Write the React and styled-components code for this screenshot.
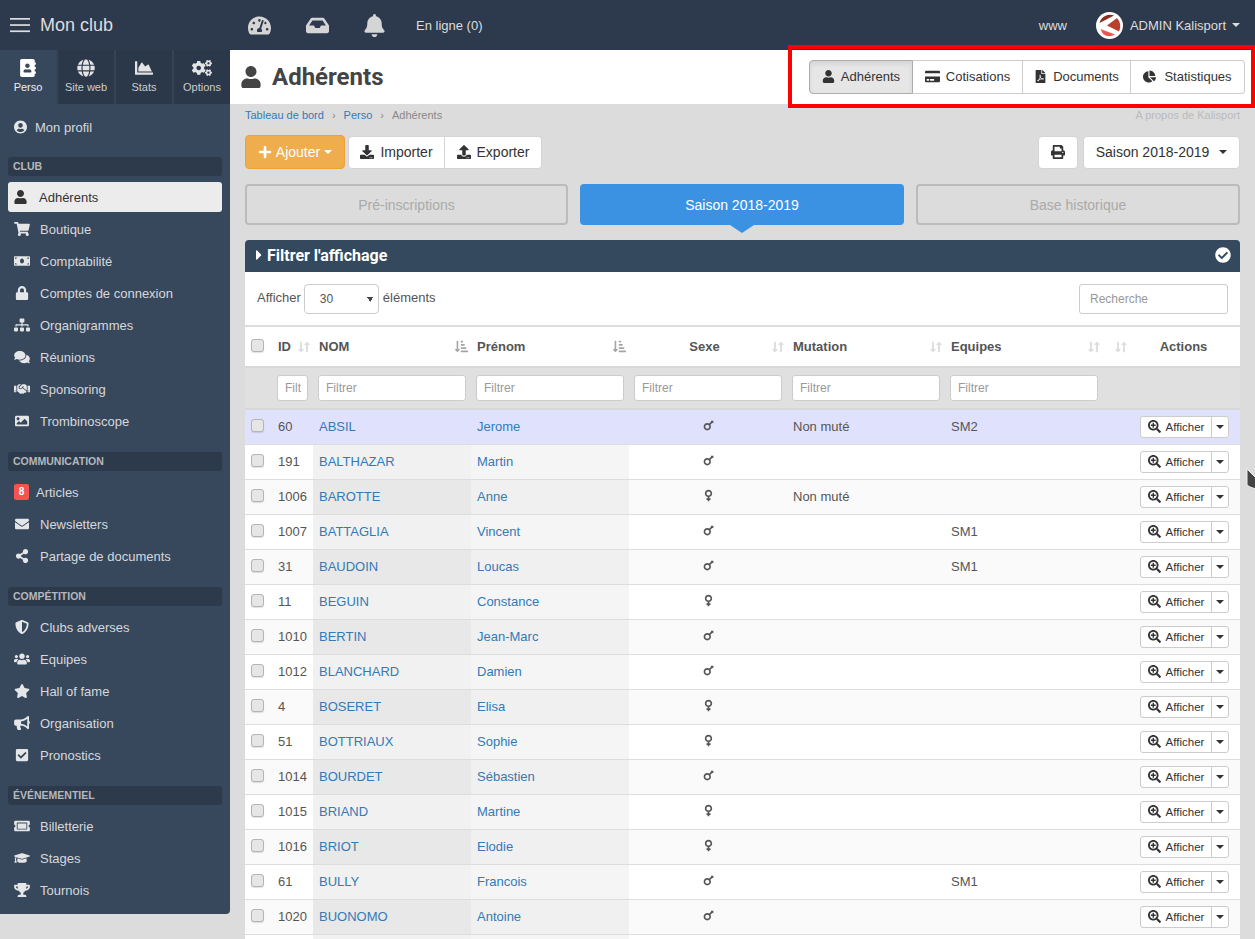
import React from 'react'
import styled, { createGlobalStyle } from 'styled-components'
import {
  FaAddressBook, FaGlobe, FaChartArea, FaCogs, FaUserCircle, FaUser, FaShoppingCart, FaMoneyBill,
  FaLock, FaSitemap, FaComments, FaHandshake, FaImage, FaEnvelope, FaShareAlt, FaShieldAlt, FaUsers,
  FaStar, FaBullhorn, FaCheckSquare, FaTicketAlt, FaGraduationCap, FaTrophy, FaTachometerAlt, FaInbox,
  FaBell, FaPlus, FaDownload, FaUpload, FaPrint, FaCreditCard, FaFilePdf, FaChartPie, FaCheckCircle,
  FaSearchPlus, FaMars, FaVenus, FaCaretRight, FaSortAmountDownAlt, FaLongArrowAltDown, FaLongArrowAltUp,
} from 'react-icons/fa'

const Global = createGlobalStyle`
  html, body {
    margin: 0;
    height: 100%;
    overflow: hidden;
    background: #dcdcdc;
    font-family: "Liberation Sans", Arial, sans-serif;
    font-size: 13px;
    color: #555;
  }
  * { box-sizing: border-box; }
`

const Page = styled.div`
  position: relative;
  width: 1255px;
  height: 939px;
  overflow: hidden;
`

const Topbar = styled.header`
  height: 50px;
  background: #2d3a4d;
  display: flex;
  align-items: center;
  color: #ddd;
`

const Brand = styled.div`
  width: 230px;
  padding-left: 10px;
  display: flex;
  align-items: center;
  gap: 10px;
  font-size: 18px;
`

const TopIcons = styled.div`
  display: flex;
  align-items: center;
  font-size: 13px;
  flex: 1;
`

const TopIcon = styled.span`
  width: ${p => p.$w}px;
  margin-right: ${p => p.$mr || 0}px;
  display: flex;
  justify-content: center;
  font-size: 23px;
  color: #d5d5d5;
`

const TopRight = styled.div`
  display: flex;
  align-items: center;
  font-size: 13px;
  padding-right: 15px;
`

const Www = styled.span`
  margin-right: 29px;
`

const UserName = styled.span`
  margin-left: 7px;
  display: inline-flex;
  align-items: center;
  gap: 6px;
`

const Caret = styled.i`
  display: inline-block;
  width: 0;
  height: 0;
  border-left: ${p => p.$s || 4}px solid transparent;
  border-right: ${p => p.$s || 4}px solid transparent;
  border-top: ${p => p.$s || 4}px solid currentColor;
`

const Body = styled.div`
  display: flex;
  align-items: flex-start;
`

const Sidebar = styled.aside`
  width: 230px;
  flex: none;
  background: #38485c;
  border-bottom-right-radius: 4px;
  padding-bottom: 7px;
`

const Tabs = styled.div`
  display: flex;
  height: 54px;
  gap: 2px;
  background: #33435a;
  margin-bottom: 8px;
`

const Tab = styled.div`
  flex: 1;
  background: ${p => p.$active ? '#38485c' : '#2a384a'};
  color: ${p => p.$active ? '#eee' : '#ccc'};
  font-size: 11px;
  display: flex;
  flex-direction: column;
  align-items: center;
  padding-top: 9px;
  gap: 4px;
  svg { height: 18px; width: 20px; color: ${p => p.$active ? '#fff' : '#e4e4e4'}; }
`

const Section = styled.div`
  margin: ${p => p.$first ? 15 : 16}px 8px 6px;
  height: 19px;
  line-height: 19px;
  padding-left: 5px;
  background: #2d3a4c;
  border-radius: 3px;
  font-size: 10.5px;
  font-weight: bold;
  color: #b4b8bd;
`

const Item = styled.div`
  margin: 0 8px 2px;
  height: 30px;
  padding-left: 6px;
  display: flex;
  align-items: center;
  gap: ${p => p.$gap || 10}px;
  border-radius: 3px;
  background: ${p => p.$active ? '#ececec' : 'transparent'};
  color: ${p => p.$active ? '#333' : '#d5d8dc'};
  svg {
    width: ${p => p.$gap ? 13 : 16}px;
    height: 14px;
    flex: none;
    color: ${p => p.$active ? '#333' : '#e4e6e8'};
  }
`

const Badge = styled.span`
  width: 15px;
  height: 16px;
  line-height: 16px;
  margin-right: -3px;
  text-align: center;
  background: #f55353;
  color: #fff;
  border-radius: 2px;
  font-size: 10px;
  font-weight: bold;
`

const Main = styled.main`
  flex: 1;
  min-width: 0;
`

const PageHead = styled.div`
  height: 54px;
  background: #fff;
  display: flex;
  align-items: center;
  padding: 0 10px;
`

const Title = styled.h1`
  flex: 1;
  margin: 0;
  display: flex;
  align-items: center;
  gap: 10px;
  font-family: Roboto, sans-serif;
  font-size: 24px;
  font-weight: 700;
  color: #444;
  svg { font-size: 22px; }
`

const Group = styled.div`
  display: flex;
  height: 34px;
`

const GroupBtn = styled.div`
  width: ${p => p.$w}px;
  height: 100%;
  display: flex;
  align-items: center;
  justify-content: center;
  gap: ${p => p.$gap || 6}px;
  padding-bottom: 1px;
  background: ${p => p.$on ? '#e6e6e6' : '#fff'};
  border: 1px solid ${p => p.$on ? '#adadad' : '#ccc'};
  border-left-width: ${p => p.$first ? 1 : 0}px;
  border-radius: ${p => p.$first ? '4px 0 0 4px' : p.$last ? '0 4px 4px 0' : '0'};
  box-shadow: ${p => p.$on ? 'inset 0 3px 5px rgba(0,0,0,.08)' : 'none'};
  font-size: 13px;
  color: #333;
  svg { font-size: 13px; }
`

const CardIcon = styled(FaCreditCard)`
  && { font-size: 15px; }
`

const Crumbs = styled.div`
  height: 31px;
  display: flex;
  justify-content: space-between;
  align-items: flex-start;
  padding: 5px 15px 0;
  font-size: 11px;
  color: #888;
`

const CrumbLink = styled.span`
  color: #337ab7;
`

const CrumbSep = styled.span`
  margin: 0 8px;
  color: #888;
`

const About = styled.span`
  color: #bbb;
`

const Content = styled.div`
  padding: 0 15px;
`

const Actions = styled.div`
  display: flex;
  align-items: center;
  height: 34px;
  margin-bottom: 15px;
`

const Spacer = styled.div`
  flex: 1;
`

const ActionBtn = styled.div`
  height: ${p => p.$orange ? 34 : 33}px;
  display: flex;
  align-items: center;
  justify-content: center;
  gap: ${p => p.$gap || 6}px;
  width: ${p => p.$w}px;
  margin-left: ${p => p.$ml || 0}px;
  background: ${p => p.$orange ? '#f0ad4e' : '#fff'};
  color: ${p => p.$orange ? '#fff' : '#333'};
  border: 1px solid ${p => p.$orange ? '#eea236' : '#d4d4d4'};
  border-left-width: ${p => p.$join ? 0 : 1}px;
  border-radius: ${p => p.$radius || '4px'};
  font-size: 14px;
  svg { font-size: 14px; }
`

const Switch = styled.div`
  display: grid;
  grid-template-columns: 323px 324px 324px;
  gap: 12px;
  margin-bottom: 15px;
`

const SwitchTab = styled.div`
  position: relative;
  height: 41px;
  display: flex;
  align-items: center;
  justify-content: center;
  border-radius: 4px;
  font-size: 14px;
  background: ${p => p.$on ? '#3b92e3' : 'transparent'};
  color: ${p => p.$on ? '#fff' : '#aaa'};
  border: ${p => p.$on ? 'none' : '2px solid #bbb'};
  &::after {
    content: '';
    display: ${p => p.$on ? 'block' : 'none'};
    position: absolute;
    left: 50%;
    bottom: -8px;
    margin-left: -12px;
    border-left: 12px solid transparent;
    border-right: 12px solid transparent;
    border-top: 8px solid #3b92e3;
  }
`

const FilterBar = styled.div`
  height: 32px;
  background: #34495e;
  border-radius: 4px 4px 0 0;
  display: flex;
  align-items: center;
  padding: 0 9px 2px 6px;
  color: #fff;
  font-family: Roboto, sans-serif;
  font-size: 16px;
  font-weight: 700;
  svg { font-size: 16px; }
`

const FilterLabel = styled.span`
  flex: 1;
`

const ListTop = styled.div`
  height: 55px;
  background: #fff;
  border-bottom: 2px solid #ddd;
  display: flex;
  align-items: center;
  padding: 0 12px 2px;
  gap: 3px;
`

const LengthSelect = styled.select`
  appearance: none;
  width: 75px;
  height: 30px;
  margin: 3px 1px 0 0;
  border: 1px solid #ccc;
  border-radius: 4px;
  padding-left: 15px;
  font-family: "Liberation Sans", sans-serif;
  font-size: 12px;
  color: #555;
  background-color: #fff;
  background-image:
    linear-gradient(to top right, transparent 50%, #444 50%),
    linear-gradient(to top left, transparent 50%, #444 50%);
  background-size: 3.5px 5px, 3.5px 5px;
  background-position: 62px 12px, 65.5px 12px;
  background-repeat: no-repeat;
`

const Search = styled.input`
  width: 149px;
  height: 30px;
  margin-top: 3px;
  border: 1px solid #ccc;
  border-radius: 3px;
  padding: 0 10px;
  font-family: "Liberation Sans", sans-serif;
  font-size: 12px;
  &::placeholder { color: #999; }
`

const Table = styled.table`
  width: 995px;
  table-layout: fixed;
  border-collapse: collapse;
  background: #fff;
`

const Th = styled.th`
  height: 40px;
  padding: ${p => p.$center ? '0 4px 0 1px' : '0 3px 0 6px'};
  font-size: 13px;
  font-weight: bold;
  color: #555;
  text-align: ${p => p.$center ? 'center' : 'left'};
`

const ThInner = styled.div`
  display: flex;
  align-items: center;
`

const ThLabel = styled.span`
  flex: 1;
  padding-left: ${p => p.$center ? 2 : 0}px;
  text-align: ${p => p.$center ? 'center' : 'left'};
`

const SortPair = styled.span`
  display: inline-flex;
  width: 12px;
  flex: none;
  color: #ddd;
  svg { width: 6px; height: 14px; }
`

const SortAlpha = styled(FaSortAmountDownAlt)`
  width: 13px;
  height: 13px;
  flex: none;
  color: #a5a5a5;
`

const FilterRow = styled.tr`
  background: #e0e0e0;
  border-top: 2px solid #d8d8d8;
  border-bottom: 2px solid #d8d8d8;
`

const FilterCell = styled.td`
  height: 42px;
  padding: 0 5px;
`

const FilterInput = styled.input`
  width: 100%;
  height: 26px;
  display: block;
  border: 1px solid #ccc;
  border-radius: 3px;
  background: #fff;
  padding: 0 6px 0 7px;
  font-family: "Liberation Sans", sans-serif;
  font-size: 12px;
  &::placeholder { color: #999; }
`

const Row = styled.tr`
  height: 35px;
  border-bottom: 1px solid #ddd;
  background: ${p => p.$hl ? '#e0e2fd' : p.$odd ? '#fafafa' : '#fff'};
`

const Td = styled.td`
  padding: 0 6px;
  font-size: 13px;
  color: #555;
  white-space: nowrap;
  overflow: hidden;
  text-align: ${p => p.$center ? 'center' : 'left'};
  background: ${p => p.$bg || 'transparent'};
`

const Link = styled.span`
  color: #337ab7;
`

const Check = styled.input.attrs({ type: 'checkbox' })`
  appearance: none;
  display: block;
  width: 13px;
  height: 13px;
  margin: -2px 0 0 0;
  background: #e6e6e6;
  border: 1px solid #b4b4b4;
  border-radius: 3px;
  box-shadow: 0 1px 1px rgba(0,0,0,.12);
`

const Sex = styled.span`
  display: inline-flex;
  color: #555;
  svg { width: 13px; height: 13px; }
`

const RowBtn = styled.div`
  display: flex;
  height: 22px;
  width: 89px;
  margin-left: 4px;
  background: #fff;
  border: 1px solid #ccc;
  border-radius: 3px;
  font-size: 11.5px;
  color: #333;
`

const RowBtnMain = styled.span`
  width: 71px;
  display: flex;
  align-items: center;
  justify-content: center;
  gap: 5px;
  border-right: 1px solid #ccc;
  svg { font-size: 13px; }
`

const RowBtnCaret = styled.span`
  flex: 1;
  display: flex;
  align-items: center;
  justify-content: center;
`

const RedFrame = styled.div`
  position: absolute;
  left: 788px;
  top: 45px;
  width: 467px;
  height: 63px;
  border: 4px solid #f00;
  pointer-events: none;
`

const Cursor = styled.svg`
  position: absolute;
  left: 1246px;
  top: 468px;
  width: 10px;
  height: 22px;
`

const menu = [
  {
    items: [[FaUserCircle, 'Mon profil', false, 8]],
  },
  {
    title: 'CLUB',
    items: [
      [FaUser, 'Adhérents', true, 12],
      [FaShoppingCart, 'Boutique'],
      [FaMoneyBill, 'Comptabilité'],
      [FaLock, 'Comptes de connexion'],
      [FaSitemap, 'Organigrammes'],
      [FaComments, 'Réunions'],
      [FaHandshake, 'Sponsoring'],
      [FaImage, 'Trombinoscope'],
    ],
  },
  {
    title: 'COMMUNICATION',
    items: [
      [null, 'Articles'],
      [FaEnvelope, 'Newsletters'],
      [FaShareAlt, 'Partage de documents'],
    ],
  },
  {
    title: 'COMPÉTITION',
    items: [
      [FaShieldAlt, 'Clubs adverses'],
      [FaUsers, 'Equipes'],
      [FaStar, 'Hall of fame'],
      [FaBullhorn, 'Organisation'],
      [FaCheckSquare, 'Pronostics'],
    ],
  },
  {
    title: 'ÉVÉNEMENTIEL',
    items: [
      [FaTicketAlt, 'Billetterie'],
      [FaGraduationCap, 'Stages'],
      [FaTrophy, 'Tournois'],
    ],
  },
]

const rows = [
  ['60', 'ABSIL', 'Jerome', 'm', 'Non muté', 'SM2'],
  ['191', 'BALTHAZAR', 'Martin', 'm', '', ''],
  ['1006', 'BAROTTE', 'Anne', 'f', 'Non muté', ''],
  ['1007', 'BATTAGLIA', 'Vincent', 'm', '', 'SM1'],
  ['31', 'BAUDOIN', 'Loucas', 'm', '', 'SM1'],
  ['11', 'BEGUIN', 'Constance', 'f', '', ''],
  ['1010', 'BERTIN', 'Jean-Marc', 'm', '', ''],
  ['1012', 'BLANCHARD', 'Damien', 'm', '', ''],
  ['4', 'BOSERET', 'Elisa', 'f', '', ''],
  ['51', 'BOTTRIAUX', 'Sophie', 'f', '', ''],
  ['1014', 'BOURDET', 'Sébastien', 'm', '', ''],
  ['1015', 'BRIAND', 'Martine', 'f', '', ''],
  ['1016', 'BRIOT', 'Elodie', 'f', '', ''],
  ['61', 'BULLY', 'Francois', 'm', '', 'SM1'],
  ['1020', 'BUONOMO', 'Antoine', 'm', '', ''],
  ['', '', '', '', '', ''],
]

const widths = [27, 41, 158, 158, 158, 158, 158, 27, 110]

const Sort = () => (
  <SortPair>
    <FaLongArrowAltDown />
    <FaLongArrowAltUp />
  </SortPair>
)

const Burger = () => (
  <svg width="20" height="16" viewBox="0 0 20 16">
    <rect y="1" width="20" height="1.7" fill="#ddd" />
    <rect y="7.2" width="20" height="1.7" fill="#ddd" />
    <rect y="13.4" width="20" height="1.7" fill="#ddd" />
  </svg>
)

const Logo = () => (
  <svg width="27" height="27" viewBox="0 0 27 27">
    <circle cx="13.5" cy="13.5" r="13.5" fill="#fff" />
    <path d="M3.5 11 A11 11 0 0 1 18 3.5 Z" fill="#8e2a20" />
    <path d="M11 13.5 L21 6 A11.5 11.5 0 0 1 23 19.5 Z" fill="#b8402f" />
    <path d="M4.5 17 L19 22.5 A11 11 0 0 1 7 22 Z" fill="#ef5350" />
  </svg>
)

function Nav() {
  return (
    <Sidebar>
      <Tabs>
        <Tab $active><FaAddressBook />Perso</Tab>
        <Tab><FaGlobe />Site web</Tab>
        <Tab><FaChartArea />Stats</Tab>
        <Tab><FaCogs />Options</Tab>
      </Tabs>
      {menu.map((group, i) => (
        <div key={i}>
          {group.title && <Section $first={i === 1}>{group.title}</Section>}
          {group.items.map(([Icon, label, active, gap]) => (
            <Item key={label} $active={active} $gap={gap}>
              {Icon ? <Icon /> : <Badge>8</Badge>}
              {label}
            </Item>
          ))}
        </div>
      ))}
    </Sidebar>
  )
}

function DataTable() {
  return (
    <Table>
      <colgroup>
        {widths.map((w, i) => <col key={i} style={{ width: w }} />)}
      </colgroup>
      <thead>
        <tr>
          <Th><Check /></Th>
          <Th><ThInner><ThLabel>ID</ThLabel><Sort /></ThInner></Th>
          <Th><ThInner><ThLabel>NOM</ThLabel><SortAlpha /></ThInner></Th>
          <Th><ThInner><ThLabel>Prénom</ThLabel><SortAlpha /></ThInner></Th>
          <Th><ThInner><ThLabel $center>Sexe</ThLabel><Sort /></ThInner></Th>
          <Th><ThInner><ThLabel>Mutation</ThLabel><Sort /></ThInner></Th>
          <Th><ThInner><ThLabel>Equipes</ThLabel><Sort /></ThInner></Th>
          <Th><ThInner><ThLabel /><Sort /></ThInner></Th>
          <Th $center>Actions</Th>
        </tr>
        <FilterRow>
          <FilterCell />
          <FilterCell><FilterInput placeholder="Filtrer" /></FilterCell>
          <FilterCell><FilterInput placeholder="Filtrer" /></FilterCell>
          <FilterCell><FilterInput placeholder="Filtrer" /></FilterCell>
          <FilterCell><FilterInput placeholder="Filtrer" /></FilterCell>
          <FilterCell><FilterInput placeholder="Filtrer" /></FilterCell>
          <FilterCell><FilterInput placeholder="Filtrer" /></FilterCell>
          <FilterCell />
          <FilterCell />
        </FilterRow>
      </thead>
      <tbody>
        {rows.map((r, i) => {
          const odd = i % 2 === 0
          const hl = i === 0
          return (
            <Row key={i} $hl={hl} $odd={odd}>
              <Td>{r[0] && <Check />}</Td>
              <Td>{r[0]}</Td>
              <Td $bg={hl ? undefined : odd ? '#e8e8e8' : '#f1f1f1'}><Link>{r[1]}</Link></Td>
              <Td $bg={hl ? undefined : odd ? '#f0f0f0' : '#f5f5f5'}><Link>{r[2]}</Link></Td>
              <Td $center>
                {r[3] && <Sex>{r[3] === 'm' ? <FaMars /> : <FaVenus />}</Sex>}
              </Td>
              <Td>{r[4]}</Td>
              <Td>{r[5]}</Td>
              <Td />
              <Td>
                {r[0] && (
                  <RowBtn>
                    <RowBtnMain><FaSearchPlus />Afficher</RowBtnMain>
                    <RowBtnCaret><Caret /></RowBtnCaret>
                  </RowBtn>
                )}
              </Td>
            </Row>
          )
        })}
      </tbody>
    </Table>
  )
}

export default function App() {
  return (
    <Page>
      <Global />
      <Topbar>
        <Brand><Burger />Mon club</Brand>
        <TopIcons>
          <TopIcon $w={59}><FaTachometerAlt /></TopIcon>
          <TopIcon $w={57}><FaInbox /></TopIcon>
          <TopIcon $w={57} $mr={13}><FaBell /></TopIcon>
          En ligne (0)
        </TopIcons>
        <TopRight>
          <Www>www</Www>
          <Logo />
          <UserName>ADMIN Kalisport<Caret /></UserName>
        </TopRight>
      </Topbar>
      <Body>
        <Nav />
        <Main>
          <PageHead>
            <Title><FaUser />Adhérents</Title>
            <Group>
              <GroupBtn $first $on $w={104}><FaUser />Adhérents</GroupBtn>
              <GroupBtn $w={110}><CardIcon />Cotisations</GroupBtn>
              <GroupBtn $w={108}><FaFilePdf />Documents</GroupBtn>
              <GroupBtn $last $w={114} $gap={8}><FaChartPie />Statistiques</GroupBtn>
            </Group>
          </PageHead>
          <Crumbs>
            <span>
              <CrumbLink>Tableau de bord</CrumbLink>
              <CrumbSep>›</CrumbSep>
              <CrumbLink>Perso</CrumbLink>
              <CrumbSep>›</CrumbSep>
              Adhérents
            </span>
            <About>A propos de Kalisport</About>
          </Crumbs>
          <Content>
            <Actions>
              <ActionBtn $orange $w={100} $gap={4}><FaPlus />Ajouter<Caret /></ActionBtn>
              <ActionBtn $w={97} $ml={3} $radius="4px 0 0 4px"><FaDownload />Importer</ActionBtn>
              <ActionBtn $w={97} $join $radius="0 4px 4px 0"><FaUpload />Exporter</ActionBtn>
              <Spacer />
              <ActionBtn $w={40}><FaPrint /></ActionBtn>
              <ActionBtn $w={157} $ml={5} $gap={10}>Saison 2018-2019<Caret /></ActionBtn>
            </Actions>
            <Switch>
              <SwitchTab>Pré-inscriptions</SwitchTab>
              <SwitchTab $on>Saison 2018-2019</SwitchTab>
              <SwitchTab>Base historique</SwitchTab>
            </Switch>
            <FilterBar>
              <FaCaretRight />
              <FilterLabel>Filtrer l'affichage</FilterLabel>
              <FaCheckCircle />
            </FilterBar>
            <ListTop>
              Afficher
              <LengthSelect defaultValue="30">
                <option value="30">30</option>
              </LengthSelect>
              éléments
              <Spacer />
              <Search placeholder="Recherche" />
            </ListTop>
            <DataTable />
          </Content>
        </Main>
      </Body>
      <RedFrame />
      <Cursor viewBox="0 0 10 22">
        <path d="M1 1 L1 17 L4 19 L10 21 L10 10 Z" fill="#444" stroke="#eee" strokeWidth="1" />
      </Cursor>
    </Page>
  )
}
